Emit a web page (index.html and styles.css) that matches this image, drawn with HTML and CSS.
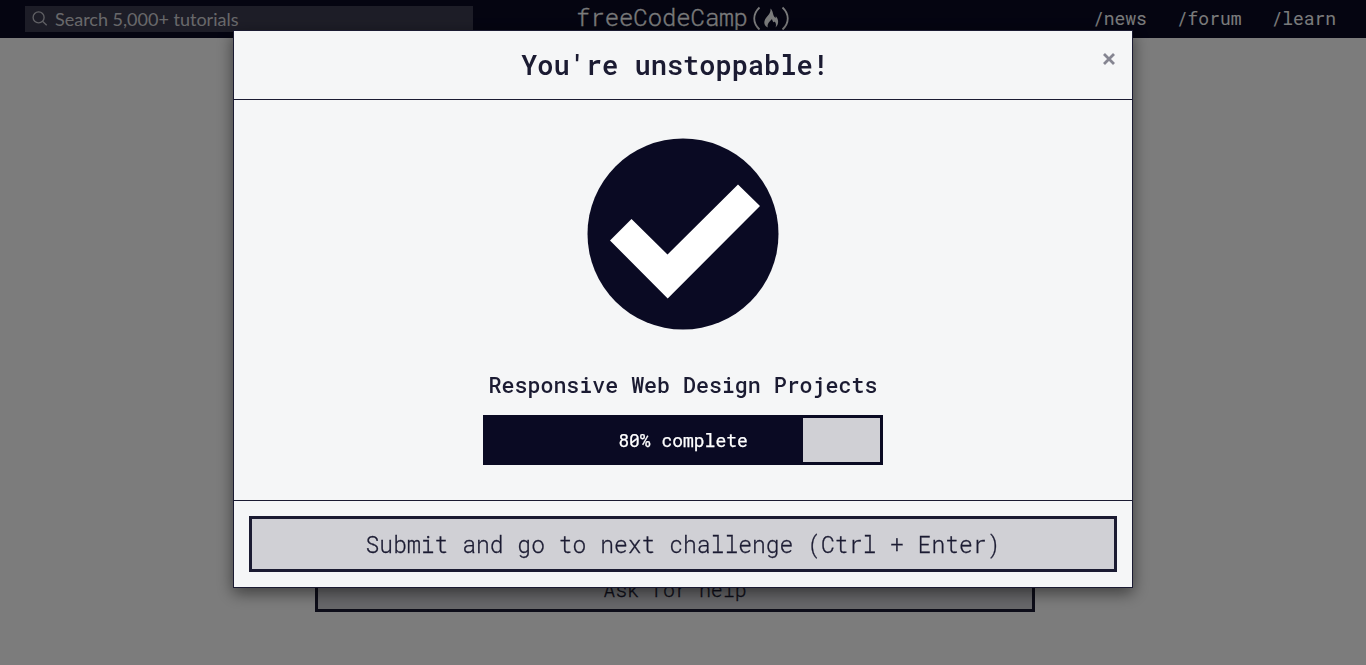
FILE: index.html
```
<!DOCTYPE html>
<html lang="en">
<head>
<meta charset="utf-8">
<title>freeCodeCamp</title>
<link rel="stylesheet" href="styles.css">
</head>
<body>
<div class="page">
  <header class="navbar">
    <div class="search">
      <svg class="search-icon" viewBox="0 0 16 16"><circle cx="6.6" cy="6.4" r="5.5"/><path d="M10.500 10.300 14.700 14.200"/></svg>
      <span>Search 5,000+ tutorials</span>
    </div>
    <svg class="logo" viewBox="0 0 214 34">
      <text class="logo-text" x="-1" y="25.8" textLength="172" lengthAdjust="spacing">freeCodeCamp</text>
      <path class="paren" d="M182.500 7.500C175.500 14 175.500 23 182.500 29.500M205.500 7.500C212.500 14 212.500 23 205.500 29.500"/>
      <path class="flame" d="M193.500 8.500C196.500 11.500 195.500 14.500 197.500 17C198.700 18.500 199.200 17.500 198.700 16C202 19.500 202 24.500 198.500 27.500C199.500 25 199 22.500 197.500 21.500C197 23 195.500 22 195 19C192.500 21.500 189.500 24.500 191 27.500C186.500 25.500 186.500 21.500 189 18C191 15.500 194 13 193.500 8.500Z"/>
    </svg>
    <nav class="links"><a>/news</a><a>/forum</a><a>/learn</a></nav>
  </header>
  <main class="content"><button class="help">Ask for help</button></main>
</div>
<div class="backdrop">
  <section class="modal">
    <header class="modal-header">
      <h1 class="title">You're unstoppable!</h1>
      <button class="close" aria-label="Close"><svg viewBox="0 0 14 14"><path d="M2 2 12 12M12 2 2 12"/></svg></button>
    </header>
    <div class="modal-body">
      <svg class="check" viewBox="0 0 192 192"><circle cx="96" cy="96" r="95.500"/><path d="M23 102.500 44.500 81 80.500 116.500 151 46.500 173 68 80.700 160.500Z"/></svg>
      <h2 class="subtitle">Responsive Web Design Projects</h2>
      <div class="progress"><div class="bar" style="width:80%"></div><span class="progress-label">80% complete</span></div>
    </div>
    <footer class="modal-footer"><button class="submit">Submit and go to next challenge (Ctrl + Enter)</button></footer>
  </section>
</div>
</body>
</html>
```
FILE: styles.css
```
* { box-sizing: border-box; }
body {
  margin: 0;
  height: 665px;
  overflow: hidden;
  background: #f8f8f8;
  color: #1b1b32;
  font-family: "Roboto Mono", "DejaVu Sans Mono", monospace;
}
button { font-family: inherit; color: inherit; border-radius: 0; }
.page { height: 665px; display: flex; flex-direction: column; }
.navbar {
  height: 38px;
  flex: none;
  padding: 0 30px 0 25px;
  display: grid;
  grid-template-columns: 448px 1fr auto;
  align-items: center;
  background: #0a0a23;
}
.search {
  height: 26px;
  padding-left: 7px;
  display: flex;
  align-items: center;
  gap: 7px;
  background: #3b3b4f;
  color: #d0d0d5;
  font: 18px/26px Lato, sans-serif;
}
.search-icon { width: 16px; height: 16px; fill: none; stroke: #c0c0c8; stroke-width: 1.3; }
.logo { width: 214px; height: 34px; margin-left: 104px; align-self: start; }
.logo-text { font: 300 24px "Roboto Mono", monospace; fill: #f5f6f7; stroke: #f5f6f7; stroke-width: 0.3; }
.paren { fill: none; stroke: #f5f6f7; stroke-width: 1.8; }
.flame { fill: #f5f6f7; }
.links { display: flex; gap: 30px; padding-bottom: 2px; color: #f5f6f7; font-size: 18px; letter-spacing: -0.04px; }
.content { flex: 1; display: flex; flex-direction: column; align-items: center; padding: 526px 16px 0 0; }
.help {
  width: 720px;
  height: 48px;
  flex: none;
  padding: 1px 0 0;
  border: 3px solid #1b1b32;
  background: #d0d0d5;
  font-size: 20px;
  font-weight: 300;
  letter-spacing: -0.05px;
  -webkit-text-stroke: 0.3px #1b1b32;
}
.backdrop {
  position: fixed;
  inset: 0;
  display: flex;
  justify-content: center;
  align-items: flex-start;
  padding-top: 30px;
  background: rgba(0, 0, 0, 0.5);
}
.modal {
  width: 900px;
  height: 558px;
  display: flex;
  flex-direction: column;
  border: 1px solid #1b1b32;
  background: #f5f6f7;
  box-shadow: 0 5px 15px rgba(0, 0, 0, 0.5);
}
.modal-header {
  height: 69px;
  padding: 0 15px;
  display: grid;
  grid-template-columns: 1fr 16px;
  border-bottom: 1px solid #1b1b32;
}
.title {
  margin: 0;
  text-align: center;
  font-size: 27px;
  font-weight: 600;
  line-height: 67px;
}
.close { width: 16px; height: 16px; margin-top: 20px; padding: 1px; border: 0; background: none; }
.close svg { display: block; width: 14px; height: 14px; fill: none; stroke: #858591; stroke-width: 2.8; }
.modal-body { flex: 1; display: flex; flex-direction: column; align-items: center; padding-top: 38px; }
.check { width: 192px; height: 192px; flex: none; fill: #0a0a23; }
.check path { fill: #fff; }
.subtitle {
  margin: 40px 0 15px;
  font-size: 21.6px;
  font-weight: 500;
  line-height: 30px;
}
.progress { width: 400px; height: 50px; display: grid; border: 3px solid #0a0a23; border-left-width: 0; background: #d0d0d5; }
.bar { grid-area: 1 / 1; min-width: 320px; background: #0a0a23; }
.progress-label {
  grid-area: 1 / 1;
  z-index: 1;
  padding-left: 3px;
  text-align: center;
  color: #fff;
  font-size: 18px;
  line-height: 45px;
  -webkit-text-stroke: 0.25px #fff;
}
.modal-footer { padding: 15px; border-top: 1px solid #1b1b32; }
.submit {
  display: block;
  width: 868px;
  height: 56px;
  border: 3px solid #1b1b32;
  background: #d0d0d5;
  font-size: 23px;
  font-weight: 300;
  -webkit-text-stroke: 0.3px #1b1b32;
}
```
